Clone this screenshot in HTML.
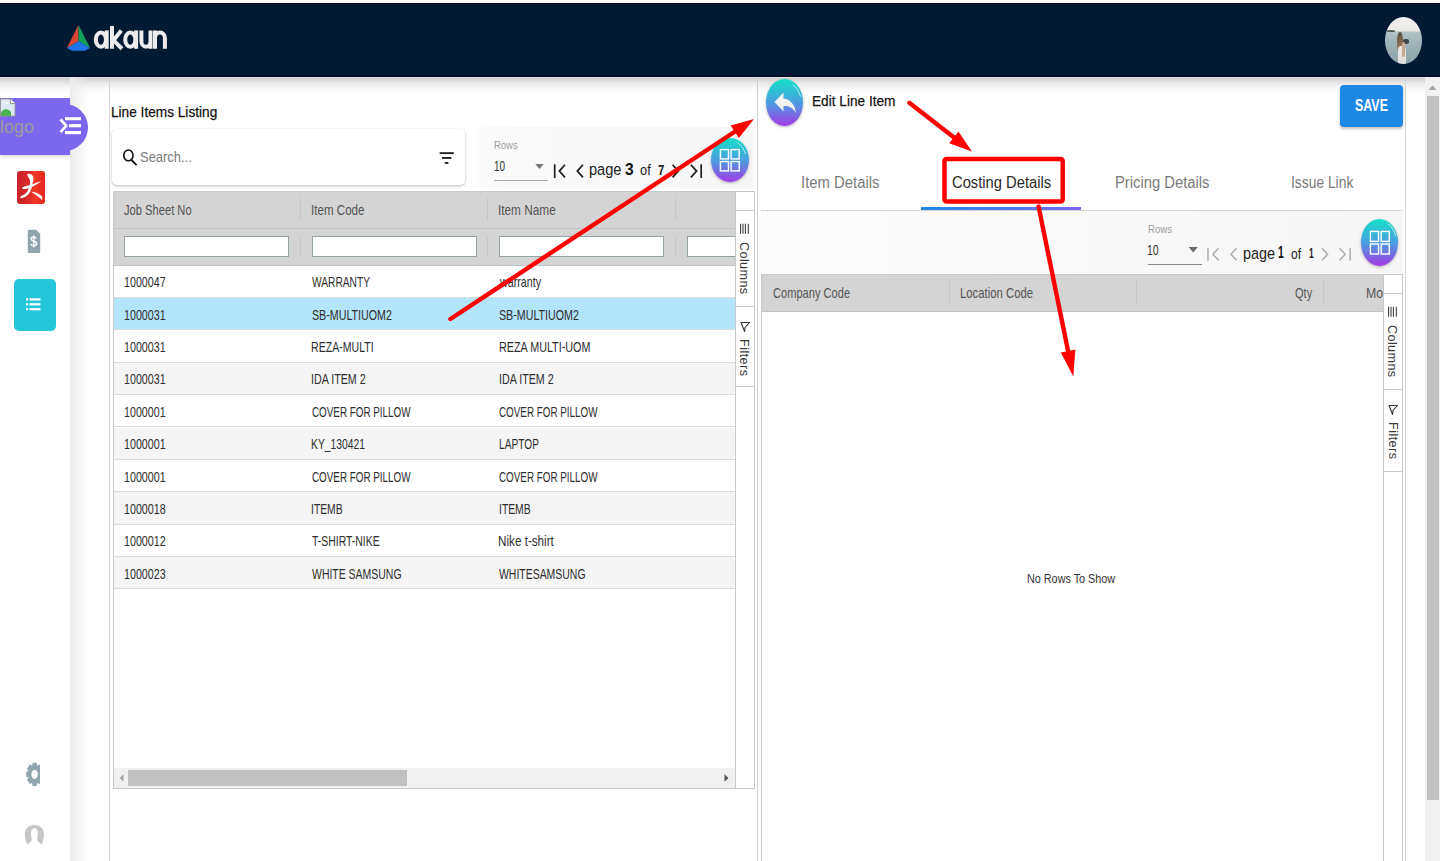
<!DOCTYPE html>
<html><head><meta charset="utf-8">
<style>
*{box-sizing:border-box;margin:0;padding:0}
html,body{width:1440px;height:861px;overflow:hidden;background:#fff;font-family:"Liberation Sans",sans-serif;color:#222}
.a{position:absolute}
.t{position:absolute;white-space:nowrap;transform-origin:0 0;line-height:1}
.c{transform:scaleX(.8)}
</style></head><body>
<!-- header -->
<div class="a" style="left:0;top:0;width:1440px;height:3px;background:#fff"></div>
<div class="a" style="left:0;top:2.5px;width:1440px;height:74px;background:#011a33;border-top:1px solid #000822"></div>
<div class="a" style="left:0;top:75px;width:1440px;height:1.6px;background:#000f26"></div>
<div class="a" style="left:0;top:76.6px;width:1440px;height:1.2px;background:#e2dfdf"></div>
<div class="a" style="left:0;top:77.8px;width:1440px;height:16px;background:linear-gradient(#cdcdcd 0%,#dedede 18%,#ececec 38%,#f6f6f6 58%,#fcfcfc 80%,rgba(255,255,255,0) 100%)"></div>

<div class="a" style="left:70px;top:77px;width:20px;height:784px;background:linear-gradient(90deg,#ededed,rgba(255,255,255,0))"></div>
<div class="a" style="left:109px;top:77px;width:1px;height:784px;background:#d6d6d6"></div>
<!-- logo -->
<svg class="a" style="left:60px;top:20px" width="120" height="40" viewBox="60 20 120 40">
 <polygon points="78.4,25 66.9,48.1 78.5,41.2" fill="#dc4532"/>
 <polygon points="78.6,25 78.5,41.2 90,48.1" fill="#12a05a"/>
 <polygon points="66.9,48.1 78.5,41.2 90,48.1 85,50.8 72,50.8" fill="#1f74e8"/>
</svg>
<svg class="a" style="left:90px;top:22px" width="80" height="30" viewBox="90 22 80 30">
 <g fill="none" stroke="#ececec" stroke-width="4">
  <ellipse cx="100.9" cy="39.6" rx="5.1" ry="7.1"/>
  <path d="M106.7 30.4 V48.75"/>
  <path d="M112 26 V48.75"/>
  <path d="M121.3 30.6 L113.5 40.3 L122 48.75"/>
  <ellipse cx="130.3" cy="39.6" rx="5.1" ry="7.1"/>
  <path d="M136.1 30.4 V48.75"/>
  <path d="M141.4 30.4 V41.2 A4.55 5.5 0 0 0 150.5 41.2 V30.4 M150.5 41 V48.75"/>
  <path d="M155 48.75 V37.9 A4.95 5.5 0 0 1 164.9 37.9 V48.75 M155 38 V30.4"/>
 </g>
</svg>
<!-- avatar -->
<div class="a" style="left:1384.6px;top:16.8px;width:37.4px;height:47.2px;border-radius:50%;overflow:hidden;background:linear-gradient(#f2f1ee 0%,#ecebe7 30%,#b4c5c8 31.5%,#9fb4b8 55%,#8aa2a7 100%)">
 <div class="a" style="left:2px;top:13.6px;width:8px;height:2px;border-radius:50% 50% 0 0;background:#4f5f55"></div>
 <div class="a" style="left:12.5px;top:15.5px;width:6px;height:20px;border-radius:45% 45% 30% 30%;background:linear-gradient(#5a4a3c,#8a6e55 60%,#b89c7e)"></div>
 <div class="a" style="left:13px;top:29px;width:8px;height:20px;border-radius:30% 30% 0 0;background:linear-gradient(#ece9e9,#dedada)"></div>
 <div class="a" style="left:18px;top:22px;width:6px;height:5px;border-radius:40%;background:#3f4648"></div>
 <div class="a" style="left:17px;top:25px;width:3px;height:15px;border-radius:2px;background:#c9a890"></div>
</div>

<!-- sidebar -->
<div class="a" style="left:0;top:98px;width:70px;height:57px;background:#7b68ee;box-shadow:0 2px 3px rgba(0,0,0,.15)"></div>
<div class="a" style="left:41px;top:103.5px;width:47px;height:47px;border-radius:50%;background:#7b68ee"></div>
<svg class="a" style="left:0;top:98px" width="16" height="19" viewBox="0 0 16 19">
 <path d="M0.5 1 H10.5 L15 5.5 V18 H0.5 Z" fill="#dfe9f5" stroke="#9a9a9a" stroke-width="1"/>
 <path d="M1 18 V14 Q6 8 11 14 V18 Z" fill="#4caf50"/>
 <path d="M10.5 1 V5.5 H15" fill="#fff" stroke="#9a9a9a" stroke-width="1"/>
 <path d="M5 6 L7 4 L9 6 Z" fill="#fff"/>
</svg>
<div class="t" style="left:0px;top:118px;font-size:18px;color:#9c9c9c">logo</div>
<svg class="a" style="left:58px;top:115px" width="26" height="22" viewBox="58 115 26 22">
 <rect x="65" y="117.2" width="16" height="3" fill="#fff"/>
 <rect x="69" y="124.1" width="12" height="3.2" fill="#fff"/>
 <rect x="65" y="131" width="16" height="3.2" fill="#fff"/>
 <path d="M60.5 119.5 L66.3 125.8 L60.5 132.2" fill="none" stroke="#fff" stroke-width="2.6"/>
</svg>
<!-- red acrobat-like icon -->
<div class="a" style="left:17px;top:171px;width:28px;height:33px;border-radius:3px;background:linear-gradient(90deg,#c7222b,#dc2a28 45%,#ef3a26 62%,#e6241f)"></div>
<svg class="a" style="left:16.7px;top:170.8px" width="28" height="33" viewBox="0 0 28 33">
 <g fill="#fff">
  <path d="M11 2.8 C13.8 2.3 16.3 4 16.4 7 C16.5 9.5 15.7 12 15 14.2 L12.9 14 C13.4 11 13.1 8.2 11.4 6.2 C10.3 4.9 10.1 3.3 11 2.8 Z"/>
  <path d="M5 17.8 C5.4 16.1 7.5 15.2 10 14.8 C14 14.1 18 11.8 24.2 10.2 C21.2 12.6 17.6 14.7 14.5 16.2 C11 17.7 8 18.3 5 17.8 Z"/>
  <path d="M15 14 C14.7 18 13.2 22 10.2 24.6 C8.2 26.2 5.6 27.2 3.4 27.2 C3 25.9 4.1 24.6 5.5 24.5 C8.6 23.5 11.2 20 12.8 15 Z"/>
  <path d="M14 20.6 C17.6 21 21.2 22.4 24.2 24.4 C25.5 25.7 25.6 27.6 25 29.2 C22.6 26.6 18.6 23.6 14 20.6 Z"/>
 </g>
</svg>
<!-- dollar doc -->
<svg class="a" style="left:27px;top:229px" width="14" height="25" viewBox="0 0 14 25">
 <path d="M2 0.8 H9.2 L13.2 4.8 V22.8 Q13.2 24 12 24 H2 Q0.8 24 0.8 22.8 V2 Q0.8 0.8 2 0.8 Z" fill="#90a4ae"/>
 <path d="M9.2 9.6 C8.6 8.4 7.6 8 6.6 8 C5.2 8 4.2 8.8 4.2 10 C4.2 12.6 9.6 11.6 9.6 14.6 C9.6 15.9 8.5 16.8 6.9 16.8 C5.6 16.8 4.5 16.2 4 15" fill="none" stroke="#fff" stroke-width="1.6"/>
 <path d="M6.8 6.4 V18.4" stroke="#fff" stroke-width="1.3"/>
</svg>
<!-- teal list button -->
<div class="a" style="left:14px;top:279px;width:42px;height:52px;border-radius:5px;background:#26c6da"></div>
<svg class="a" style="left:26px;top:298px" width="15" height="13" viewBox="0 0 15 13">
 <rect x="0" y="0.3" width="2.2" height="2.2" fill="#fff"/><rect x="3.5" y="0.3" width="11" height="2.2" fill="#fff"/>
 <rect x="0" y="5.2" width="2.2" height="2.2" fill="#fff"/><rect x="3.5" y="5.2" width="11" height="2.2" fill="#fff"/>
 <rect x="0" y="10.1" width="2.2" height="2.2" fill="#fff"/><rect x="3.5" y="10.1" width="11" height="2.2" fill="#fff"/>
</svg>
<!-- gear -->
<svg class="a" style="left:24px;top:761px" width="15.5" height="26" viewBox="0 0 15.5 26">
 <g fill="#90a4ae" transform="translate(10.6 13.3) scale(0.74 1)">
  <path d="M-2.8 -11.6 H2.8 L3.4 -8.4 L6.2 -10 L10.2 -5.8 L8.3 -3 L11.4 -2.5 V2.5 L8.3 3 L10.2 5.8 L6.2 10 L3.4 8.4 L2.8 11.6 H-2.8 L-3.4 8.4 L-6.2 10 L-10.2 5.8 L-8.3 3 L-11.4 2.5 V-2.5 L-8.3 -3 L-10.2 -5.8 L-6.2 -10 L-3.4 -8.4 Z M0 -4.6 A4.4 4.6 0 1 0 0.01 -4.6 Z" fill-rule="evenodd"/>
 </g>
</svg>
<!-- person -->
<svg class="a" style="left:24px;top:824px" width="21" height="22" viewBox="24 824 21 22">
 <path d="M27.4 844.8 C25.5 841 24.8 837 24.8 834 C24.8 828.5 29 824.9 34.4 824.9 C39.8 824.9 44 828.5 44 834 C44 837 43.2 841 41.6 844.8 C39.8 843 37.8 841.5 37.1 840 C37.4 838 37.8 836 37.8 833 C37.8 830 36.5 827.9 34.4 827.9 C32.3 827.9 31 830 31 833 C31 836 31.4 838 31.9 840 C31 841.5 29.2 843 27.4 844.8 Z" fill="#c6c6c6"/>
</svg>


<div class="a" style="left:757.2px;top:77px;width:1px;height:784px;background:#cfcfcf"></div>
<div class="a" style="left:1405px;top:77px;width:1px;height:784px;background:#d6d6d6"></div>
<div class="a" style="left:1425px;top:77px;width:15px;height:784px;background:#f1f1f1"></div>
<div class="a" style="left:1427px;top:96px;width:12px;height:704px;background:#c1c1c1"></div>
<svg class="a" style="left:1425px;top:80px" width="15" height="14"><path d="M3.5 10 L7.5 5.5 L11.5 10 Z" fill="#a3a3a3"/></svg>
<div class="t" style="left:111.29px;top:104.00px;font-size:15px;color:#111;font-weight:400;transform:scaleX(0.9100);-webkit-text-stroke:0.25px #111;">Line Items Listing</div>
<div class="a" style="left:112.4px;top:128.5px;width:352.6px;height:56.2px;background:#fff;border-radius:5px;box-shadow:0 1px 3px rgba(0,0,0,.28)"></div>
<svg class="a" style="left:120px;top:146px" width="20" height="22" viewBox="120 146 20 22"><ellipse cx="128.4" cy="155.4" rx="4.6" ry="5.4" fill="none" stroke="#111" stroke-width="1.6"/><path d="M131.5 160 L136.6 165.2" stroke="#111" stroke-width="1.8"/></svg>
<div class="t" style="left:140.20px;top:149.00px;font-size:15px;color:#7a7a7a;font-weight:400;transform:scaleX(0.8630);">Search...</div>
<svg class="a" style="left:438px;top:149px" width="18" height="17" viewBox="438 149 18 17"><rect x="439.6" y="152.2" width="14.2" height="1.9" fill="#222"/><rect x="442" y="157" width="9.4" height="1.9" fill="#222"/><rect x="444.8" y="162" width="3.6" height="1.9" fill="#222"/></svg>
<div class="a" style="left:472px;top:127.4px;width:283px;height:61.2px;background:linear-gradient(90deg,rgba(250,250,250,0),#fafafa 4%,#f6f6f6)"></div>
<div class="t" style="left:493.80px;top:140.00px;font-size:10.5px;color:#9c9c9c;font-weight:400;transform:scaleX(0.8998);">Rows</div>
<div class="t" style="left:493.84px;top:158.00px;font-size:15px;color:#333;font-weight:400;transform:scaleX(0.6648);">10</div>
<svg class="a" style="left:534px;top:162px" width="12" height="8"><path d="M1.3 1.9 H9.7 L5.5 6.9 Z" fill="#747474"/></svg>
<div class="a" style="left:493.8px;top:179.8px;width:54.6px;height:1.6px;background:#a9a9a9"></div>
<svg class="a" style="left:550px;top:160px" width="160" height="22" viewBox="550 160 160 22"><g fill="none" stroke="#1e1e1e" stroke-width="1.7"><path d="M554.7 164.3 V178"/><path d="M565 164.8 L559.3 171.1 L565 177.4"/><path d="M583 164.8 L577.3 171.1 L583 177.4"/><path d="M672.6 164.8 L678.3 171.1 L672.6 177.4"/><path d="M690.9 164.8 L696.6 171.1 L690.9 177.4"/><path d="M701.2 164.3 V178"/></g></svg>
<div class="t" style="left:589.13px;top:162.00px;font-size:16.8px;color:#222;font-weight:400;transform:scaleX(0.8681);">page</div>
<div class="t" style="left:625.00px;top:161.00px;font-size:17px;color:#111;font-weight:700;transform:scaleX(0.9111);">3</div>
<div class="t" style="left:640.40px;top:162.00px;font-size:15.5px;color:#222;font-weight:400;transform:scaleX(0.8296);">of</div>
<div class="t" style="left:657.90px;top:163.00px;font-size:14.5px;color:#222;font-weight:700;transform:scaleX(0.7875);">7</div>
<div class="a" style="left:711.4px;top:137.5px;width:37.6px;height:44.5px;border-radius:50%;background:linear-gradient(#14e0c8,#4a9fe0 50%,#a23be6);box-shadow:0 1px 3px rgba(0,0,0,.3)"></div>
<svg class="a" style="left:711.4px;top:137.5px" width="37.6" height="44.5"><rect x="9.40" y="11.59" width="8.08" height="9.34" fill="none" stroke="#fff" stroke-width="1.4"/><rect x="9.40" y="23.57" width="8.08" height="9.34" fill="none" stroke="#fff" stroke-width="1.4"/><rect x="20.12" y="11.59" width="8.08" height="9.34" fill="none" stroke="#fff" stroke-width="1.4"/><rect x="20.12" y="23.57" width="8.08" height="9.34" fill="none" stroke="#fff" stroke-width="1.4"/><path d="M26.59 4.55 A16.60 20.05 0 0 1 34.59 16.05" fill="none" stroke="rgba(255,255,255,.75)" stroke-width="0.9"/></svg>
<div class="a" style="left:112.5px;top:190.5px;width:642.1px;height:598.7px;border:1px solid #c5cacd;background:#fff"></div>
<div class="a" style="left:113.5px;top:191.5px;width:621.0px;height:74.5px;background:#d4d4d4"></div>
<div class="a" style="left:113.5px;top:228px;width:621.0px;height:1px;background:#c0c6c8"></div>
<div class="a" style="left:113.5px;top:265px;width:621.0px;height:1px;background:#c0c6c8"></div>
<div class="a" style="left:300px;top:198px;width:1px;height:23px;background:#c6c6c6"></div>
<div class="a" style="left:300px;top:236px;width:1px;height:21px;background:#c9c9c9"></div>
<div class="a" style="left:487.4px;top:198px;width:1px;height:23px;background:#c6c6c6"></div>
<div class="a" style="left:487.4px;top:236px;width:1px;height:21px;background:#c9c9c9"></div>
<div class="a" style="left:675px;top:198px;width:1px;height:23px;background:#c6c6c6"></div>
<div class="a" style="left:675px;top:236px;width:1px;height:21px;background:#c9c9c9"></div>
<div class="a" style="left:124px;top:236px;width:165px;height:20.5px;background:#fff;border:1px solid #93a3a6"></div>
<div class="a" style="left:311.5px;top:236px;width:165.0px;height:20.5px;background:#fff;border:1px solid #93a3a6"></div>
<div class="a" style="left:499px;top:236px;width:164.79999999999995px;height:20.5px;background:#fff;border:1px solid #93a3a6"></div>
<div class="a" style="left:686.6px;top:236px;width:58.39999999999998px;height:20.5px;background:#fff;border:1px solid #93a3a6"></div>
<div class="t" style="left:124.10px;top:203.00px;font-size:14.3px;color:#555;font-weight:400;transform:scaleX(0.7804);">Job Sheet No</div>
<div class="t" style="left:310.69px;top:203.00px;font-size:14.3px;color:#555;font-weight:400;transform:scaleX(0.8115);">Item Code</div>
<div class="t" style="left:498.17px;top:203.00px;font-size:14.3px;color:#555;font-weight:400;transform:scaleX(0.8251);">Item Name</div>
<div class="a" style="left:113.5px;top:265.5px;width:621.0px;height:32.4px;background:#fff;border-bottom:1px solid #dcdcdc"></div>
<div class="t" style="left:124.04px;top:275.00px;font-size:14.1px;color:#2e2e2e;font-weight:400;transform:scaleX(0.7588);">1000047</div>
<div class="t" style="left:311.60px;top:275.00px;font-size:14.1px;color:#2e2e2e;font-weight:400;transform:scaleX(0.7235);">WARRANTY</div>
<div class="t" style="left:500.06px;top:275.00px;font-size:14.1px;color:#2e2e2e;font-weight:400;transform:scaleX(0.7590);">warranty</div>
<div class="a" style="left:113.5px;top:297.9px;width:621.0px;height:32.4px;background:#b3e5fc;border-bottom:1px solid #dcdcdc"></div>
<div class="t" style="left:124.04px;top:308.00px;font-size:14.1px;color:#2e2e2e;font-weight:400;transform:scaleX(0.7588);">1000031</div>
<div class="t" style="left:311.60px;top:308.00px;font-size:14.1px;color:#2e2e2e;font-weight:400;transform:scaleX(0.7575);">SB-MULTIUOM2</div>
<div class="t" style="left:499.30px;top:308.00px;font-size:14.1px;color:#2e2e2e;font-weight:400;transform:scaleX(0.7575);">SB-MULTIUOM2</div>
<div class="a" style="left:113.5px;top:330.3px;width:621.0px;height:32.4px;background:#fff;border-bottom:1px solid #dcdcdc"></div>
<div class="t" style="left:124.04px;top:340.00px;font-size:14.1px;color:#2e2e2e;font-weight:400;transform:scaleX(0.7588);">1000031</div>
<div class="t" style="left:310.85px;top:340.00px;font-size:14.1px;color:#2e2e2e;font-weight:400;transform:scaleX(0.7512);">REZA-MULTI</div>
<div class="t" style="left:498.54px;top:340.00px;font-size:14.1px;color:#2e2e2e;font-weight:400;transform:scaleX(0.7649);">REZA MULTI-UOM</div>
<div class="a" style="left:113.5px;top:362.7px;width:621.0px;height:32.4px;background:#f5f5f5;border-bottom:1px solid #dcdcdc"></div>
<div class="t" style="left:124.04px;top:372.00px;font-size:14.1px;color:#2e2e2e;font-weight:400;transform:scaleX(0.7588);">1000031</div>
<div class="t" style="left:310.84px;top:372.00px;font-size:14.1px;color:#2e2e2e;font-weight:400;transform:scaleX(0.7584);">IDA ITEM 2</div>
<div class="t" style="left:498.54px;top:372.00px;font-size:14.1px;color:#2e2e2e;font-weight:400;transform:scaleX(0.7584);">IDA ITEM 2</div>
<div class="a" style="left:113.5px;top:395.1px;width:621.0px;height:32.4px;background:#fff;border-bottom:1px solid #dcdcdc"></div>
<div class="t" style="left:124.04px;top:405.00px;font-size:14.1px;color:#2e2e2e;font-weight:400;transform:scaleX(0.7588);">1000001</div>
<div class="t" style="left:311.60px;top:405.00px;font-size:14.1px;color:#2e2e2e;font-weight:400;transform:scaleX(0.6989);">COVER FOR PILLOW</div>
<div class="t" style="left:499.30px;top:405.00px;font-size:14.1px;color:#2e2e2e;font-weight:400;transform:scaleX(0.6989);">COVER FOR PILLOW</div>
<div class="a" style="left:113.5px;top:427.5px;width:621.0px;height:32.4px;background:#f5f5f5;border-bottom:1px solid #dcdcdc"></div>
<div class="t" style="left:124.04px;top:437.00px;font-size:14.1px;color:#2e2e2e;font-weight:400;transform:scaleX(0.7588);">1000001</div>
<div class="t" style="left:310.87px;top:437.00px;font-size:14.1px;color:#2e2e2e;font-weight:400;transform:scaleX(0.7318);">KY_130421</div>
<div class="t" style="left:498.58px;top:437.00px;font-size:14.1px;color:#2e2e2e;font-weight:400;transform:scaleX(0.7210);">LAPTOP</div>
<div class="a" style="left:113.5px;top:459.9px;width:621.0px;height:32.4px;background:#fff;border-bottom:1px solid #dcdcdc"></div>
<div class="t" style="left:124.04px;top:470.00px;font-size:14.1px;color:#2e2e2e;font-weight:400;transform:scaleX(0.7588);">1000001</div>
<div class="t" style="left:311.60px;top:470.00px;font-size:14.1px;color:#2e2e2e;font-weight:400;transform:scaleX(0.6989);">COVER FOR PILLOW</div>
<div class="t" style="left:499.30px;top:470.00px;font-size:14.1px;color:#2e2e2e;font-weight:400;transform:scaleX(0.6989);">COVER FOR PILLOW</div>
<div class="a" style="left:113.5px;top:492.29999999999995px;width:621.0px;height:32.4px;background:#f5f5f5;border-bottom:1px solid #dcdcdc"></div>
<div class="t" style="left:124.04px;top:502.00px;font-size:14.1px;color:#2e2e2e;font-weight:400;transform:scaleX(0.7588);">1000018</div>
<div class="t" style="left:310.87px;top:502.00px;font-size:14.1px;color:#2e2e2e;font-weight:400;transform:scaleX(0.7344);">ITEMB</div>
<div class="t" style="left:498.57px;top:502.00px;font-size:14.1px;color:#2e2e2e;font-weight:400;transform:scaleX(0.7344);">ITEMB</div>
<div class="a" style="left:113.5px;top:524.7px;width:621.0px;height:32.4px;background:#fff;border-bottom:1px solid #dcdcdc"></div>
<div class="t" style="left:124.04px;top:534.00px;font-size:14.1px;color:#2e2e2e;font-weight:400;transform:scaleX(0.7588);">1000012</div>
<div class="t" style="left:311.60px;top:534.00px;font-size:14.1px;color:#2e2e2e;font-weight:400;transform:scaleX(0.7399);">T-SHIRT-NIKE</div>
<div class="t" style="left:498.47px;top:534.00px;font-size:14.1px;color:#2e2e2e;font-weight:400;transform:scaleX(0.8295);">Nike t-shirt</div>
<div class="a" style="left:113.5px;top:557.0999999999999px;width:621.0px;height:32.4px;background:#f5f5f5;border-bottom:1px solid #dcdcdc"></div>
<div class="t" style="left:124.04px;top:567.00px;font-size:14.1px;color:#2e2e2e;font-weight:400;transform:scaleX(0.7588);">1000023</div>
<div class="t" style="left:311.60px;top:567.00px;font-size:14.1px;color:#2e2e2e;font-weight:400;transform:scaleX(0.7424);">WHITE SAMSUNG</div>
<div class="t" style="left:499.30px;top:567.00px;font-size:14.1px;color:#2e2e2e;font-weight:400;transform:scaleX(0.7416);">WHITESAMSUNG</div>
<div class="a" style="left:113.5px;top:768px;width:621.0px;height:20px;background:#f1f1f1"></div>
<div class="a" style="left:128.3px;top:770px;width:279px;height:15.6px;background:#c1c1c1"></div>
<svg class="a" style="left:114px;top:770px" width="620" height="16"><path d="M9.5 4.2 L5.6 8 L9.5 11.8 Z" fill="#a3a3a3"/><path d="M610.5 4.2 L614.4 8 L610.5 11.8 Z" fill="#505050"/></svg>
<div class="a" style="left:735px;top:191.5px;width:19px;height:596.7px;background:#fff"></div>
<div class="a" style="left:734.5px;top:191.5px;width:1px;height:596.7px;background:#c5cacd"></div>
<div class="a" style="left:735.5px;top:209.5px;width:19px;height:1px;background:#c5cacd"></div>
<div class="a" style="left:735.5px;top:305.5px;width:19px;height:1px;background:#c5cacd"></div>
<div class="a" style="left:735.5px;top:386.3px;width:19px;height:1px;background:#c5cacd"></div>
<svg class="a" style="left:735.5px;top:220.0px" width="18" height="16" viewBox="0 0 18 16"><g stroke="#3a3a3a" stroke-width="1.05"><path d="M4.6 3.7 V13.8 M7 3.7 V13.8 M9.4 3.7 V13.8 M12.3 3.7 V13.8"/></g></svg>
<div class="t" style="left:750.08px;top:242.00px;font-size:12.6px;letter-spacing:0.4px;color:#3a3a3a;transform:rotate(90deg);transform-origin:0 0">Columns</div>
<svg class="a" style="left:735.5px;top:319.0px" width="18" height="16" viewBox="0 0 18 16"><path d="M5 3.5 H13.5 L9 8.5 L8.6 12.5 Z" fill="none" stroke="#333" stroke-width="1.1" stroke-linejoin="round"/></svg>
<div class="t" style="left:750.38px;top:338.70px;font-size:12.6px;letter-spacing:0.45px;color:#3a3a3a;transform:rotate(90deg);transform-origin:0 0">Filters</div>
<div class="a" style="left:766px;top:79.3px;width:37.4px;height:46.5px;border-radius:50%;background:linear-gradient(#14e0c8,#4a9fe0 50%,#a23be6);box-shadow:0 1px 3px rgba(0,0,0,.3)"></div>
<svg class="a" style="left:766px;top:79.3px" width="38" height="47" viewBox="0 0 38 47"><path d="M17.5 13.5 L8.5 23 L17.5 32.5 V27 C23 26.5 27 28.5 30 34 C29 26 25 20.5 17.5 19.5 Z" fill="#f2f2f2"/><path d="M26.8 5.6 A16.5 21 0 0 1 34.6 17.6" fill="none" stroke="rgba(255,255,255,.75)" stroke-width="0.9"/></svg>
<div class="t" style="left:811.88px;top:94.00px;font-size:14.8px;color:#151515;font-weight:400;transform:scaleX(0.9221);-webkit-text-stroke:0.25px #151515;">Edit Line Item</div>
<div class="a" style="left:1339.9px;top:85px;width:63.1px;height:42px;background:#1e88e5;border-radius:4px;box-shadow:0 2px 3px rgba(0,0,0,.25)"></div>
<div class="t" style="left:1355.40px;top:98.00px;font-size:15.6px;color:#fff;font-weight:700;transform:scaleX(0.7970);">SAVE</div>
<div class="t" style="left:801.07px;top:175.00px;font-size:16px;color:#7a7a7a;font-weight:400;transform:scaleX(0.9285);">Item Details</div>
<div class="t" style="left:951.90px;top:175.00px;font-size:16px;color:#2a2a2a;font-weight:400;transform:scaleX(0.9210);">Costing Details</div>
<div class="t" style="left:1114.58px;top:175.00px;font-size:16px;color:#7a7a7a;font-weight:400;transform:scaleX(0.9234);">Pricing Details</div>
<div class="t" style="left:1290.84px;top:175.00px;font-size:16px;color:#7a7a7a;font-weight:400;transform:scaleX(0.8648);">Issue Link</div>
<div class="a" style="left:760.5px;top:210.3px;width:642.5px;height:1px;background:#d4d4d4"></div>
<div class="a" style="left:920.7px;top:207.2px;width:160.3px;height:2.8px;background:linear-gradient(90deg,#1e88e5,#7b68ee)"></div>
<div class="a" style="left:760.5px;top:211.3px;width:642.5px;height:62px;background:linear-gradient(90deg,#fcfcfc,#f6f6f6)"></div>
<div class="t" style="left:1147.60px;top:224.00px;font-size:10.5px;color:#9c9c9c;font-weight:400;transform:scaleX(0.9114);">Rows</div>
<div class="t" style="left:1146.90px;top:242.00px;font-size:15px;color:#333;font-weight:400;transform:scaleX(0.6974);">10</div>
<svg class="a" style="left:1187px;top:245px" width="12" height="9"><path d="M1.6 2 H10.8 L6.2 7.4 Z" fill="#6a6a6a"/></svg>
<div class="a" style="left:1147.6px;top:263.6px;width:54.3px;height:1.5px;background:#8a8a8a"></div>
<svg class="a" style="left:1200px;top:244px" width="160" height="20" viewBox="1200 244 160 20"><g fill="none" stroke="#b0b0b0" stroke-width="1.6"><path d="M1208 247.8 V260.8"/><path d="M1218.5 248.3 L1213 254.3 L1218.5 260.3"/><path d="M1236.6 248.3 L1231 254.3 L1236.6 260.3"/><path d="M1322 248.3 L1327.6 254.3 L1322 260.3"/><path d="M1339.6 248.3 L1345.2 254.3 L1339.6 260.3"/><path d="M1350.2 247.8 V260.8"/></g></svg>
<div class="t" style="left:1242.74px;top:246.00px;font-size:16.8px;color:#222;font-weight:400;transform:scaleX(0.8584);">page</div>
<div class="t" style="left:1278.09px;top:244.00px;font-size:17px;color:#111;font-weight:700;transform:scaleX(0.6125);">1</div>
<div class="t" style="left:1291.00px;top:246.00px;font-size:15.5px;color:#222;font-weight:400;transform:scaleX(0.7782);">of</div>
<div class="t" style="left:1308.80px;top:246.00px;font-size:14.5px;color:#222;font-weight:700;transform:scaleX(0.5750);">1</div>
<div class="a" style="left:1360.5px;top:219px;width:37.7px;height:47.4px;border-radius:50%;background:linear-gradient(#14e0c8,#4a9fe0 50%,#a23be6);box-shadow:0 1px 3px rgba(0,0,0,.3)"></div>
<svg class="a" style="left:1360.5px;top:219px" width="37.7" height="47.4"><rect x="9.42" y="12.43" width="8.11" height="9.95" fill="none" stroke="#fff" stroke-width="1.4"/><rect x="9.42" y="25.02" width="8.11" height="9.95" fill="none" stroke="#fff" stroke-width="1.4"/><rect x="20.17" y="12.43" width="8.11" height="9.95" fill="none" stroke="#fff" stroke-width="1.4"/><rect x="20.17" y="25.02" width="8.11" height="9.95" fill="none" stroke="#fff" stroke-width="1.4"/><path d="M26.67 4.72 A16.65 21.50 0 0 1 34.69 17.06" fill="none" stroke="rgba(255,255,255,.75)" stroke-width="0.9"/></svg>
<div class="a" style="left:760.5px;top:273.6px;width:642.3px;height:589.4px;border:1px solid #c5cacd;background:#fff"></div>
<div class="a" style="left:761.5px;top:274.6px;width:621.8px;height:37.6px;background:#d4d4d4"></div>
<div class="a" style="left:761.5px;top:311.2px;width:621.8px;height:1px;background:#bfc5c7"></div>
<div class="a" style="left:948.6px;top:281px;width:1px;height:23px;background:#c6c6c6"></div>
<div class="a" style="left:1136.2px;top:281px;width:1px;height:23px;background:#c6c6c6"></div>
<div class="a" style="left:1323.3px;top:281px;width:1px;height:23px;background:#c6c6c6"></div>
<div class="t" style="left:773.00px;top:286.00px;font-size:14.3px;color:#555;font-weight:400;transform:scaleX(0.7758);">Company Code</div>
<div class="t" style="left:959.81px;top:286.00px;font-size:14.3px;color:#555;font-weight:400;transform:scaleX(0.7923);">Location Code</div>
<div class="t" style="left:1294.90px;top:286.00px;font-size:14.3px;color:#555;font-weight:400;transform:scaleX(0.7708);">Qty</div>
<div class="a" style="left:1366px;top:285px;width:17.3px;height:18px;overflow:hidden"><div class="t" style="left:0;top:0.9px;font-size:14.3px;color:#555;transform:scaleX(.86)">Mo</div></div>
<div class="a" style="left:1383.3px;top:274.6px;width:1px;height:861px;background:#c5cacd"></div>
<div class="a" style="left:1384.3px;top:292.8px;width:18.5px;height:1px;background:#c5cacd"></div>
<div class="a" style="left:1384.3px;top:388.7px;width:18.5px;height:1px;background:#c5cacd"></div>
<div class="a" style="left:1384.3px;top:471.3px;width:18.5px;height:1px;background:#c5cacd"></div>
<svg class="a" style="left:1383.8px;top:303.1px" width="18" height="16" viewBox="0 0 18 16"><g stroke="#3a3a3a" stroke-width="1.05"><path d="M4.6 3.7 V13.8 M7 3.7 V13.8 M9.4 3.7 V13.8 M12.3 3.7 V13.8"/></g></svg>
<div class="t" style="left:1398.38px;top:325.10px;font-size:12.6px;letter-spacing:0.4px;color:#3a3a3a;transform:rotate(90deg);transform-origin:0 0">Columns</div>
<svg class="a" style="left:1383.8px;top:402.1px" width="18" height="16" viewBox="0 0 18 16"><path d="M5 3.5 H13.5 L9 8.5 L8.6 12.5 Z" fill="none" stroke="#333" stroke-width="1.1" stroke-linejoin="round"/></svg>
<div class="t" style="left:1398.68px;top:421.80px;font-size:12.6px;letter-spacing:0.45px;color:#3a3a3a;transform:rotate(90deg);transform-origin:0 0">Filters</div>
<div class="t" style="left:1027.39px;top:572.00px;font-size:13.3px;color:#333;font-weight:400;transform:scaleX(0.8127);">No Rows To Show</div>
<svg class="a" style="left:0;top:0" width="1440" height="861"><path d="M450.4 319.0 L738.1 129.5" stroke="#ff0000" stroke-width="4.4" stroke-linecap="round"/><path d="M754.0 119.0 L738.9 137.9 L730.7 125.4 Z" fill="#ff0000"/><path d="M909.3 102.8 L957.0 139.8" stroke="#ff0000" stroke-width="4.4" stroke-linecap="round"/><path d="M972.0 151.5 L949.2 143.3 L958.4 131.5 Z" fill="#ff0000"/><path d="M1038.6 206.6 L1068.9 355.0" stroke="#ff0000" stroke-width="4.4" stroke-linecap="round"/><path d="M1073.3 376.6 L1060.8 352.6 L1075.4 349.6 Z" fill="#ff0000"/><rect x="944.5" y="159.1" width="118.2" height="42.3" rx="2" fill="none" stroke="#ff0000" stroke-width="4.5"/></svg>
</body></html>
